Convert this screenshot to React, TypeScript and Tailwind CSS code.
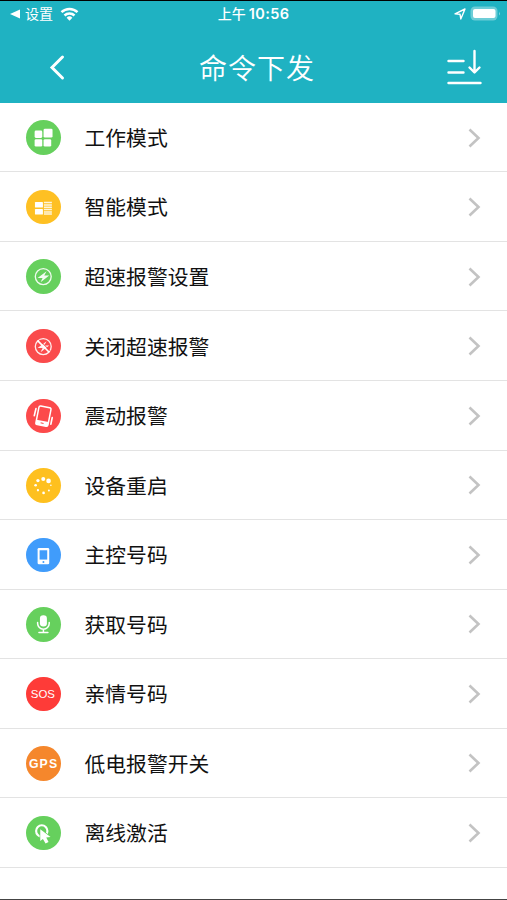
import type { ReactNode } from "react";

type Command = {
  name: string;
  color: string;
  icon: ReactNode;
};

const GridGlyph = () => (
  <g fill="#fff">
    <rect x="26" y="32" width="23" height="22" rx="4" />
    <rect x="53" y="26" width="27" height="27" rx="4" />
    <rect x="26" y="58" width="23" height="22" rx="4" />
    <rect x="53" y="58" width="23" height="22" rx="4" />
  </g>
);

const ListGlyph = () => (
  <g fill="#fff">
    <rect x="27" y="36" width="24" height="17" rx="2" />
    <rect x="27" y="57" width="24" height="17" rx="2" />
    <path
      d="M54 38h24M54 45h24M54 52h24M54 59h24M54 66h24M54 72h24"
      stroke="#fff"
      strokeWidth="4.5"
      opacity="0.85"
    />
  </g>
);

const BoltGlyph = () => (
  <g>
    <circle cx="52" cy="53" r="24" fill="none" stroke="#fff" strokeWidth="4" opacity="0.9" />
    <path d="M62 37L35 57h15l-6 13 26-20H55z" fill="#fff" opacity="0.92" />
  </g>
);

const BoltOffGlyph = () => (
  <g>
    <circle cx="52" cy="53" r="24" fill="none" stroke="#fff" strokeWidth="4" opacity="0.9" />
    <path d="M62 37L35 57h15l-6 13 26-20H55z" fill="#fff" opacity="0.92" />
    <path d="M39 32L73 66" stroke="#fa4b4c" strokeWidth="3" />
    <path d="M35 35L70 70" stroke="#fff" strokeWidth="5" />
  </g>
);

const ShakeGlyph = () => (
  <g fill="none" stroke="#fff">
    <g transform="rotate(11 52 52)">
      <rect x="34" y="23" width="37" height="57" rx="5" strokeWidth="4.5" />
      <path d="M34 66h37v11q0 3-3 3H37q-3 0-3-3z" fill="#fff" stroke="none" />
      <path d="M48 73h9" stroke="#fc4a4b" strokeWidth="3" />
    </g>
    <path d="M30 29l-5 21M79 56l-4 20" strokeWidth="5" strokeLinecap="round" />
  </g>
);

const LoadingGlyph = () => (
  <g fill="#fff">
    <circle cx="52" cy="33" r="6" />
    <circle cx="68" cy="39" r="7" />
    <circle cx="75" cy="52" r="2.4" />
    <circle cx="69" cy="68" r="3" />
    <circle cx="53" cy="75" r="4" />
    <circle cx="36" cy="67" r="3.5" />
    <circle cx="29" cy="52" r="4" />
    <circle cx="36" cy="38" r="5" />
  </g>
);

const PhoneGlyph = () => (
  <g>
    <rect x="35" y="30" width="35" height="49" rx="4" fill="#fff" />
    <rect x="41" y="37" width="23" height="28" fill="#409cfb" />
    <circle cx="52.5" cy="72" r="3" fill="#409cfb" />
  </g>
);

const MicGlyph = () => (
  <g fill="none" stroke="#fff" strokeWidth="4.5" strokeLinecap="round">
    <rect x="42" y="25" width="21" height="34" rx="10" fill="#fff" stroke="none" />
    <path d="M35 47v3a17.5 17 0 0 0 35 0v-3M52.5 67v9M39 77h27" />
  </g>
);

const SosGlyph = () => (
  <text
    x="51"
    y="63"
    textAnchor="middle"
    fontSize="34.5"
    fill="#fff"
    className="font-['Liberation_Sans',sans-serif]"
  >
    SOS
  </text>
);

const GpsGlyph = () => (
  <text
    x="53"
    y="66"
    textAnchor="middle"
    fontSize="37"
    letterSpacing="3.5"
    fill="#fff"
    className="font-['Liberation_Sans',sans-serif] font-bold"
  >
    GPS
  </text>
);

const ClickGlyph = () => (
  <g>
    <circle cx="47.5" cy="45" r="17" fill="none" stroke="#fff" strokeWidth="6.5" />
    <path
      d="M43 40v35l8-6 8 14 9-5-7-13 13-2z"
      fill="#fff"
      stroke="#66d05d"
      strokeWidth="4"
      className="[paint-order:stroke]"
    />
  </g>
);

const commands: Command[] = [
  { name: "工作模式", color: "bg-[#66d05d]", icon: <GridGlyph /> },
  { name: "智能模式", color: "bg-[#fec023]", icon: <ListGlyph /> },
  { name: "超速报警设置", color: "bg-[#66d05d]", icon: <BoltGlyph /> },
  { name: "关闭超速报警", color: "bg-[#fa4b4c]", icon: <BoltOffGlyph /> },
  { name: "震动报警", color: "bg-[#fc4a4b]", icon: <ShakeGlyph /> },
  { name: "设备重启", color: "bg-[#fec01f]", icon: <LoadingGlyph /> },
  { name: "主控号码", color: "bg-[#409cfb]", icon: <PhoneGlyph /> },
  { name: "获取号码", color: "bg-[#66d05d]", icon: <MicGlyph /> },
  { name: "亲情号码", color: "bg-[#fe3b38]", icon: <SosGlyph /> },
  { name: "低电报警开关", color: "bg-[#f5872c]", icon: <GpsGlyph /> },
  { name: "离线激活", color: "bg-[#66d05d]", icon: <ClickGlyph /> },
];

const StatusBar = () => (
  <div className="grid h-[25px] grid-cols-3 items-center text-white">
    <div className="flex items-center pl-[10px]">
      <svg width="10" height="10" viewBox="0 0 10 10" fill="currentColor">
        <path d="M0 5L10 0.5v9z" />
      </svg>
      <span className="ml-[5px] pb-[2px] text-[14px] leading-none">设置</span>
      <svg className="ml-[7px]" width="19" height="14" viewBox="0 0 19 14" fill="none">
        <path
          d="M1.5 5.2a11.5 11.5 0 0 1 16 0M4.5 8.500a7.200 7.200 0 0 1 10 0"
          stroke="currentColor"
          strokeWidth="2.5"
        />
        <path d="M9.5 13.7L6.6 10.7a4.2 4.2 0 0 1 5.8 0z" fill="currentColor" />
      </svg>
    </div>
    <div className="flex items-center justify-center text-[14px] leading-none font-medium">
      <span className="pb-[2px]">上午</span>
      <span className="ml-[3px] pt-px font-[Inter,sans-serif] text-[14.5px] font-semibold tracking-[0.4px]">
        10:56
      </span>
    </div>
    <div className="flex items-center justify-end pr-[6px]">
      <svg width="12" height="12" viewBox="0 0 12 12" fill="none">
        <path d="M1 5.8L11 1 6.8 11 6 6.2z" stroke="currentColor" strokeWidth="1.4" strokeLinejoin="round" />
      </svg>
      <svg className="ml-[4px]" width="31" height="15" viewBox="0 0 31 15">
        <rect x="0.5" y="0.5" width="27" height="14" rx="4.5" fill="#fff" fillOpacity="0.35" />
        <rect x="3" y="3" width="22.5" height="9" rx="2" fill="#fff" />
        <path d="M29 5.5q1.6 2 0 4z" fill="#fff" fillOpacity="0.5" />
      </svg>
    </div>
  </div>
);

const TitleBar = () => (
  <div className="grid flex-1 grid-cols-[1fr_auto_1fr] items-center pt-[6px] text-white">
    <svg className="ml-[48px]" width="18" height="28" viewBox="0 0 18 28" fill="none">
      <path d="M14.5 4L4 14.5 14.5 25" stroke="currentColor" strokeWidth="3" strokeLinecap="round" />
    </svg>
    <h1 className="pl-[7px] text-[28px] leading-none font-[350] tracking-[1px]">命令下发</h1>
    <svg className="mr-[25px] justify-self-end" width="36" height="36" viewBox="0 0 36 36" fill="none">
      <path
        d="M2.5 12h15M2.5 23.5h15M2.5 34h32M28.5 2v20M23.5 18.5l5 5 5-5"
        stroke="currentColor"
        strokeWidth="2.4"
        strokeLinecap="round"
        strokeLinejoin="round"
      />
    </svg>
  </div>
);

const CommandRow = ({ command }: { command: Command }) => (
  <li className="flex h-[69.55px] items-center border-b border-[#e3e3e3] px-[26px] pt-px">
    <div className={`size-[34.5px] shrink-0 rounded-full ${command.color}`}>
      <svg className="size-full" viewBox="0 0 104 104">
        {command.icon}
      </svg>
    </div>
    <span className="ml-[24px] flex-1 pb-[0.5px] text-[20.8px] leading-none text-[#111]">{command.name}</span>
    <svg width="13" height="20" viewBox="0 0 13 20" fill="none">
      <path d="M1.5 1.5L10.5 10 1.5 18.5" stroke="#c3c3c3" strokeWidth="2.6" />
    </svg>
  </li>
);

const App = () => {
  return (
    <div className="flex h-[900px] w-[507px] flex-col overflow-hidden border-t border-b border-t-black border-b-[#444] bg-white font-['Noto_Sans_CJK_SC',sans-serif]">
      <header className="flex h-[101.8px] shrink-0 flex-col bg-[#1fb2c2]">
        <StatusBar />
        <TitleBar />
      </header>
      <ul>
        {commands.map((command) => (
          <CommandRow key={command.name} command={command} />
        ))}
      </ul>
    </div>
  );
};

export default App;
